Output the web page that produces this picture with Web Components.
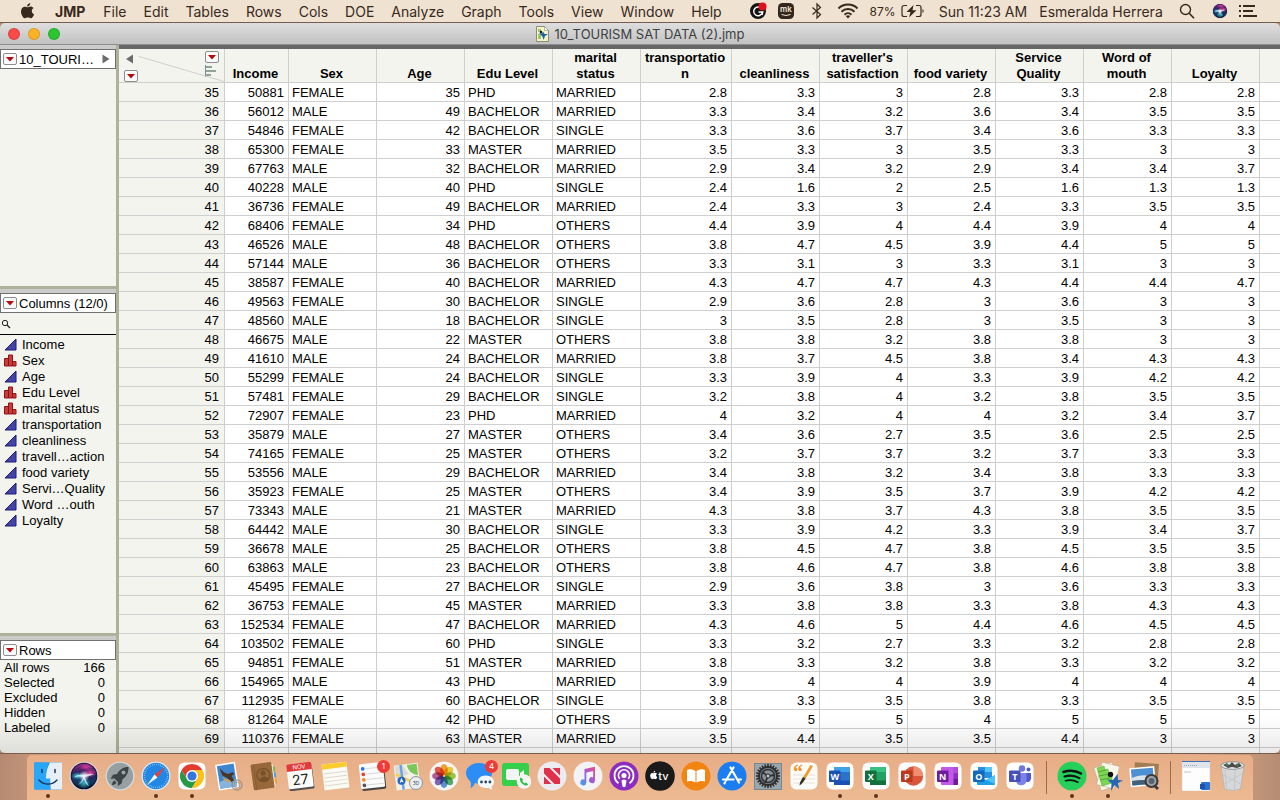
<!DOCTYPE html>
<html lang="en">
<head>
<meta charset="utf-8">
<title>10_TOURISM SAT DATA (2).jmp</title>
<style>
  body {
    margin: 0;
    height: 100vh;
    overflow: hidden;
    display: flex;
    flex-direction: column;
    background: linear-gradient(90deg, #b58a72, #e3ae8a 8%, #e3ae8a 92%, #b58d73);
    font-family: "Liberation Sans", Arial, sans-serif;
    font-size: 13px;
    color: #000;
  }
</style>
</head>
<body>
  <menu-bar>
    <menu-item strong>JMP</menu-item>
    <menu-item>File</menu-item>
    <menu-item>Edit</menu-item>
    <menu-item>Tables</menu-item>
    <menu-item>Rows</menu-item>
    <menu-item>Cols</menu-item>
    <menu-item>DOE</menu-item>
    <menu-item>Analyze</menu-item>
    <menu-item>Graph</menu-item>
    <menu-item>Tools</menu-item>
    <menu-item>View</menu-item>
    <menu-item>Window</menu-item>
    <menu-item>Help</menu-item>
    <status-area slot="status"></status-area>
  </menu-bar>

  <jmp-window>
    <span slot="title">10_TOURISM SAT DATA (2).jmp</span>
    <side-panel slot="side" expandable>
      <span slot="heading">10_TOURI…</span>
    </side-panel>
    <side-panel slot="side">
      <span slot="heading">Columns (12/0)</span>
      <column-list></column-list>
    </side-panel>
    <side-panel slot="side">
      <span slot="heading">Rows</span>
      <row-counts></row-counts>
    </side-panel>
    <data-grid></data-grid>
  </jmp-window>

  <dock-bar></dock-bar>

<script>
// ---------- small helper ----------
const attach = (el, html) => {
  const template = document.createElement("template")
  template.innerHTML = html
  el.attachShadow({ mode: "open" })
  el.shadowRoot.appendChild(template.content.cloneNode(true))
}

// siri is used both in the menu bar and in the dock
const siri = `
  <svg viewBox="0 0 30 30" aria-hidden="true">
    <defs>
      <linearGradient id="sg" x1="0" y1="0" x2="0" y2="1">
        <stop offset="0" stop-color="#8d2a86"/><stop offset=".4" stop-color="#2a1f5c"/>
        <stop offset=".75" stop-color="#15365f"/><stop offset="1" stop-color="#0a1026"/>
      </linearGradient>
      <radialGradient id="sw"><stop offset="0" stop-color="#fff"/><stop offset="1" stop-color="#fff" stop-opacity="0"/></radialGradient>
      <radialGradient id="sp"><stop offset="0" stop-color="#f0419c"/><stop offset="1" stop-color="#f0419c" stop-opacity="0"/></radialGradient>
      <radialGradient id="st"><stop offset="0" stop-color="#35d8e0"/><stop offset="1" stop-color="#35d8e0" stop-opacity="0"/></radialGradient>
    </defs>
    <circle cx="15" cy="15" r="14.500" fill="#d9d4dc"/>
    <circle cx="15" cy="15" r="13.300" fill="#0d0b20"/>
    <circle cx="15" cy="15" r="12.600" fill="url(#sg)"/>
    <ellipse cx="21" cy="12" rx="7" ry="4.500" fill="url(#sp)"/>
    <ellipse cx="17" cy="6" rx="7" ry="3.500" fill="url(#sp)" opacity=".8"/>
    <ellipse cx="8.500" cy="15" rx="6.500" ry="4" fill="url(#st)"/>
    <ellipse cx="15" cy="22" rx="6.500" ry="6" fill="url(#st)" opacity=".8"/>
    <path d="M15 14q-2 7-6 10 5-3 6-6 1 5 5 7-3-4-5-11zM15 14q-6-1-10 2 5-1 10 0 5 0 10-3-5-1-10 1z" fill="#e8f4ff" opacity=".75"/>
    <circle cx="15" cy="15" r="5.500" fill="url(#sw)"/>
  </svg>`

// ---------- menu bar ----------
class MenuBar extends HTMLElement {
  constructor() {
    super()
    attach(this, `
      <style>
        :host {
          display: flex;
          flex: none;
          align-items: center;
          height: 22px;
          padding: 0 18px 0 20px;
          background: #f0e2d0;
          border-bottom: 1px solid #765d50;
          color: #37291c;
          font-family: Inter, sans-serif;
          font-size: 14px;
        }
        nav { display: flex; }
        button { border: 0; padding: 0; margin-right: 11px; background: none; color: inherit; height: 22px; }
        svg { display: block; width: 15px; height: 18px; }
        slot[name=status] { display: block; }
        .fill { flex: 1; }
      </style>
      <button aria-label="Apple menu">
        <svg viewBox="0 0 15 18"><path fill="currentColor" d="M10.3 1c.1 1.900-1.500 3.600-3.200 3.500C6.900 2.800 8.500 1.200 10.300 1zM7.600 5.300c.7 0 1.600-.9 3-.8 1 0 2.300.6 3 1.600-2.700 1.600-2.200 5.200.500 6.300-.6 1.500-2 3.900-3.300 3.900-1.200 0-1.600-.7-3-.7s-1.900.7-2.900.7C3.200 16.300 1 12.500 1 9.400c0-3 2-4.700 3.800-4.700 1.200 0 2.200.6 2.800.6z"/></svg>
      </button>
      <nav><slot></slot></nav>
      <div class="fill"></div>
      <slot name="status"></slot>
    `)
  }
}

class MenuItem extends HTMLElement {
  constructor() {
    super()
    attach(this, `
      <style>
        :host { display: block; }
        button {
          border: 0;
          height: 22px;
          padding: 0 8px 0 9px;
          background: none;
          color: inherit;
          font: inherit;
        }
        :host([strong]) button { padding: 0 9px; font-weight: 700; }
      </style>
      <button><slot></slot></button>
    `)
  }
}

class StatusArea extends HTMLElement {
  constructor() {
    super()
    attach(this, `
      <style>
        :host { display: flex; align-items: center; height: 22px; }
        button {
          display: flex;
          align-items: center;
          justify-content: center;
          width: 28px;
          height: 22px;
          padding: 0;
          border: 0;
          background: none;
          color: inherit;
          font: inherit;
          white-space: nowrap;
        }
        .wide { width: 34px; }
        .search { width: 38px; }
        .battery { width: 70px; gap: 5px; font-size: 12px; }
        .clock { width: 102px; }
        .user { width: 134px; }
        svg { display: block; flex: none; width: 18px; height: 18px; }
        .siri svg { width: 16px; height: 16px; }
      </style>
      <button aria-label="Grammarly">
        <svg viewBox="0 0 18 18"><circle cx="9" cy="9" r="8" fill="#141414"/><path d="M12.500 6.500a4.400 4.400 0 1 0 .700 4.500M9.500 10h4.300l-.8 3" fill="none" stroke="#fff" stroke-width="1.400"/><circle cx="13.500" cy="4.500" r="4" fill="#e0101c"/></svg>
      </button>
      <button aria-label="mk">
        <svg viewBox="0 0 18 18"><rect x="1" y="1" width="16" height="16" rx="4.500" fill="#33271d"/><text x="9" y="10" font-family="Inter" font-size="8" font-weight="600" fill="#f0e2d0" text-anchor="middle">mk</text><path d="M4.500 12.500q4.500 2 9 0" stroke="#f0e2d0" fill="none"/></svg>
      </button>
      <button class="wide" aria-label="Bluetooth">
        <svg viewBox="0 0 18 18"><path d="M4.500 5.500l8 7L9 16V2l3.500 3.500-8 7" fill="none" stroke="currentColor" stroke-width="1.200"/></svg>
      </button>
      <button aria-label="Wi-Fi">
        <svg viewBox="0 0 22 18" style="width:22px"><g fill="none" stroke="currentColor" stroke-width="2"><path d="M1.500 6.500a13.500 13.500 0 0 1 19 0"/><path d="M4.500 9.700a9.300 9.300 0 0 1 13 0"/><path d="M7.500 12.700a5 5 0 0 1 7 0"/></g><path d="M8.900 14.200a3 3 0 0 1 4.200 0L11 16.400z" fill="currentColor"/></svg>
      </button>
      <button class="battery">87%
        <svg viewBox="0 0 24 14" style="width:24px;height:14px"><path d="M6 1.500H3a2 2 0 0 0-2 2v7a2 2 0 0 0 2 2h3M15 1.500h3a2 2 0 0 1 2 2v7a2 2 0 0 1-2 2h-3" fill="none" stroke="currentColor" stroke-width="1.200"/><path d="M21.500 5v4c1.500-.5 1.500-3.500 0-4zM12.500 1L5.500 8h4L8 13.500 15.500 6.200h-4z" fill="currentColor"/></svg>
      </button>
      <button class="clock">Sun 11:23 AM</button>
      <button class="user">Esmeralda Herrera</button>
      <button aria-label="Spotlight" class="search">
        <svg viewBox="0 0 18 18"><circle cx="7.500" cy="7.500" r="5" fill="none" stroke="currentColor" stroke-width="1.400"/><path d="M11.200 11.200l4.800 5" stroke="currentColor" stroke-width="1.600"/></svg>
      </button>
      <button aria-label="Siri" class="siri">${siri}</button>
      <button aria-label="Notification Center">
        <svg viewBox="0 0 18 18"><g stroke="currentColor" stroke-width="2"><path d="M0 4h2M4 4h12M0 9h2M4 9h10M0 14h2M4 14h14"/></g></svg>
      </button>
    `)
  }
}

// ---------- window ----------
class JmpWindow extends HTMLElement {
  constructor() {
    super()
    attach(this, `
      <style>
        :host {
          display: flex;
          flex: 1;
          flex-direction: column;
          min-height: 0;
          position: relative;
          overflow: hidden;
          border-radius: 5px;
        }
        header {
          display: grid;
          grid-template-columns: 1fr auto 1fr;
          align-items: center;
          flex: none;
          height: 21px;
          padding: 0 8px;
          background: linear-gradient(#dedede, #c2c2c2);
          border-bottom: 1px solid #8e8e8e;
          color: #404040;
          font-family: Inter, sans-serif;
        }
        .lights { display: flex; gap: 8px; }
        .lights button { width: 12px; height: 12px; padding: 0; border: 1px solid #0002; border-radius: 50%; }
        h1 { display: flex; align-items: center; gap: 6px; margin: 0; font-size: 13px; font-weight: 400; }
        .body { flex: 1; min-height: 0; display: flex; }
        aside {
          flex: none;
          display: grid;
          grid-template-rows: 241fr 344fr 117fr;
          gap: 3px;
          width: 116px;
          border-right: 3px solid #afb19b;
          background: #afb19b;
        }
        main { flex: 1; min-width: 0; overflow: hidden; border-top: 4px solid #676767; background: #fff; }
        /* soft shade that the dock throws on the window */
        .shade {
          position: absolute;
          inset: auto 0 0 0;
          height: 36px;
          background: linear-gradient(#0000, #00000016);
          pointer-events: none;
        }
      </style>
      <header>
        <div class="lights">
          <button aria-label="Close" style="background:#fb4a47"></button>
          <button aria-label="Minimize" style="background:#fdb225"></button>
          <button aria-label="Zoom" style="background:#2bc532"></button>
        </div>
        <h1>
          <svg width="13" height="16" viewBox="0 0 13 16"><path d="M.5.500h8l4 4v11H.5z" fill="#f4f3c8" stroke="#8c8c78"/><path d="M8.500.500v4h4z" fill="#fff" stroke="#8c8c78" stroke-width=".6"/><path d="M2 3h3v3H2zM2 8h3v5H2z" fill="#9bc76b"/><path d="M3 7l3 .5 1-2 1.500 2.500L12 8 9 10l-1.500 4L6.500 10.500z" fill="#1f5fa8"/><circle cx="5" cy="6" r="1.200" fill="#111"/></svg>
          <slot name="title"></slot>
        </h1>
      </header>
      <div class="body">
        <aside><slot name="side"></slot></aside>
        <main><slot></slot></main>
      </div>
      <div class="shade"></div>
    `)
  }
}

class RedTriangle extends HTMLElement {
  constructor() {
    super()
    attach(this, `
      <style>
        :host { display: block; flex: none; }
        button {
          display: grid;
          place-items: center;
          width: 14px;
          height: 12px;
          padding: 0;
          border: 1px solid #8d8d8d;
          border-radius: 2px;
          background: #fafafa;
        }
        svg { display: block; }
      </style>
      <button aria-label="Options"><svg width="8" height="5" viewBox="0 0 8 5"><path d="M0 0h8L4 4.500z" fill="#b3090f"/></svg></button>
    `)
  }
}

class SidePanel extends HTMLElement {
  constructor() {
    super()
    attach(this, `
      <style>
        :host { display: block; min-height: 0; overflow: hidden; background: #f3f4ee; }
        .edge { border-top: 4px solid #cbcbc9; }
        header {
          display: flex;
          align-items: center;
          gap: 2px;
          box-sizing: border-box;
          height: 20px;
          padding: 0 5px 0 2px;
          border: 1px solid #707070;
          background: #fff;
          white-space: nowrap;
        }
        .more { flex: 1; display: none; }
        .more svg { display: block; margin-left: auto; }
        :host([expandable]) .more { display: block; }
      </style>
      <div class="edge">
        <header>
          <red-triangle></red-triangle>
          <slot name="heading"></slot>
          <span class="more"><svg width="8" height="10" viewBox="0 0 8 10"><path d="M.500.500v9L7.500 5z" fill="#6c6c6c"/></svg></span>
        </header>
      </div>
      <slot></slot>
    `)
  }
}

const columns = [
  ["Income", 1], ["Sex", 0], ["Age", 1], ["Edu Level", 0], ["marital status", 0],
  ["transportation", 1], ["cleanliness", 1], ["travell…action", 1], ["food variety", 1],
  ["Servi…Quality", 1], ["Word …outh", 1], ["Loyalty", 1]
]

const continuous = `<svg width="13" height="13" viewBox="0 0 13 13"><path d="M12 1v11H1z" fill="#4444a8" stroke="#1d1d72"/></svg>`
const nominal = `<svg width="13" height="13" viewBox="0 0 13 13"><path d="M.500 4.500h4V12h-4zM4.500 1h4v11h-4zM8.500 7.500h3.500V12H8.500z" fill="#c83c3c" stroke="#8c1414"/></svg>`

class ColumnList extends HTMLElement {
  constructor() {
    super()
    attach(this, `
      <style>
        :host { display: block; }
        label {
          display: flex;
          align-items: center;
          height: 22px;
          margin-bottom: 1px;
          border-bottom: 1px solid #000;
          box-sizing: border-box;
        }
        label svg { flex: none; margin: 0 4px 0 1px; }
        input { flex: 1; min-width: 0; border: 0; padding: 0; outline: 0; background: none; font: inherit; }
        ul { list-style: none; margin: 0; padding: 0 0 0 4px; }
        li { display: flex; align-items: center; gap: 5px; height: 16px; white-space: nowrap; }
      </style>
      <label><svg width="10" height="10" viewBox="0 0 10 10"><circle cx="4" cy="4" r="2.700" fill="none" stroke="#222"/><path d="M6 6l3 3" stroke="#222" stroke-width="1.300"/></svg><input type="search" aria-label="Filter columns"></label>
      <ul>${columns.map(([name, c]) => `<li>${c ? continuous : nominal}<span>${name}</span></li>`).join("")}</ul>
    `)
  }
}

class RowCounts extends HTMLElement {
  constructor() {
    super()
    const counts = { "All rows": 166, Selected: 0, Excluded: 0, Hidden: 0, Labeled: 0 }
    attach(this, `
      <style>
        :host { display: block; }
        dl { margin: 0; padding: 0 11px 0 4px; }
        div { display: flex; justify-content: space-between; line-height: 15px; }
        dd { margin: 0; }
      </style>
      <dl>${Object.entries(counts).map(([k, v]) => `<div><dt>${k}</dt><dd>${v}</dd></div>`).join("")}</dl>
    `)
  }
}

// ---------- data table ----------
// sex: F/M, education: P/B/M, marital: M/S/O
const data = `
35 50881 F 35 P M 2.8 3.3 3 2.8 3.3 2.8 2.8
36 56012 M 49 B M 3.3 3.4 3.2 3.6 3.4 3.5 3.5
37 54846 F 42 B S 3.3 3.6 3.7 3.4 3.6 3.3 3.3
38 65300 F 33 M M 3.5 3.3 3 3.5 3.3 3 3
39 67763 M 32 B M 2.9 3.4 3.2 2.9 3.4 3.4 3.7
40 40228 M 40 P S 2.4 1.6 2 2.5 1.6 1.3 1.3
41 36736 F 49 B M 2.4 3.3 3 2.4 3.3 3.5 3.5
42 68406 F 34 P O 4.4 3.9 4 4.4 3.9 4 4
43 46526 M 48 B O 3.8 4.7 4.5 3.9 4.4 5 5
44 57144 M 36 B O 3.3 3.1 3 3.3 3.1 3 3
45 38587 F 40 B M 4.3 4.7 4.7 4.3 4.4 4.4 4.7
46 49563 F 30 B S 2.9 3.6 2.8 3 3.6 3 3
47 48560 M 18 B S 3 3.5 2.8 3 3.5 3 3
48 46675 M 22 M O 3.8 3.8 3.2 3.8 3.8 3 3
49 41610 M 24 B M 3.8 3.7 4.5 3.8 3.4 4.3 4.3
50 55299 F 24 B S 3.3 3.9 4 3.3 3.9 4.2 4.2
51 57481 F 29 B S 3.2 3.8 4 3.2 3.8 3.5 3.5
52 72907 F 23 P M 4 3.2 4 4 3.2 3.4 3.7
53 35879 M 27 M O 3.4 3.6 2.7 3.5 3.6 2.5 2.5
54 74165 F 25 M O 3.2 3.7 3.7 3.2 3.7 3.3 3.3
55 53556 M 29 B M 3.4 3.8 3.2 3.4 3.8 3.3 3.3
56 35923 F 25 M O 3.4 3.9 3.5 3.7 3.9 4.2 4.2
57 73343 M 21 M M 4.3 3.8 3.7 4.3 3.8 3.5 3.5
58 64442 M 30 B S 3.3 3.9 4.2 3.3 3.9 3.4 3.7
59 36678 M 25 B O 3.8 4.5 4.7 3.8 4.5 3.5 3.5
60 63863 M 23 B O 3.8 4.6 4.7 3.8 4.6 3.8 3.8
61 45495 F 27 B S 2.9 3.6 3.8 3 3.6 3.3 3.3
62 36753 F 45 M M 3.3 3.8 3.8 3.3 3.8 4.3 4.3
63 152534 F 47 B M 4.3 4.6 5 4.4 4.6 4.5 4.5
64 103502 F 60 P S 3.3 3.2 2.7 3.3 3.2 2.8 2.8
65 94851 F 51 M M 3.8 3.3 3.2 3.8 3.3 3.2 3.2
66 154965 M 43 P M 3.9 4 4 3.9 4 4 4
67 112935 F 60 B S 3.8 3.3 3.5 3.8 3.3 3.5 3.5
68 81264 M 42 P O 3.9 5 5 4 5 5 5
69 110376 F 63 M M 3.5 4.4 3.5 3.5 4.4 3 3
70 105900 F 52 B O 3.3 3.8 3 3.8 3.8 3 3`

const sex = { F: "FEMALE", M: "MALE" }
const edu = { P: "PHD", B: "BACHELOR", M: "MASTER" }
const marital = { M: "MARRIED", S: "SINGLE", O: "OTHERS" }

const toRow = line => {
  const [n, income, s, age, e, m, ...scores] = line.split(" ")
  return `<tr><th scope="row">${n}</th><td>${income}</td><td class="t">${sex[s]}</td><td>${age}</td>
    <td class="t">${edu[e]}</td><td class="t">${marital[m]}</td>
    ${scores.map(v => `<td>${v}</td>`).join("")}<td></td></tr>`
}

const widths = [106, 64, 88, 88, 88, 88, 91, 88, 88, 88, 88, 88, 88]
const headings = ["Income", "Sex", "Age", "Edu Level", "marital status", "transportation", "cleanliness",
  "traveller's satisfaction", "food variety", "Service Quality", "Word of mouth", "Loyalty", ""]

class DataGrid extends HTMLElement {
  constructor() {
    super()
    attach(this, `
      <style>
        :host { display: block; }
        table { width: 100%; border-collapse: separate; border-spacing: 0; table-layout: fixed; font-size: 13px; }
        th, td {
          box-sizing: border-box;
          height: 19px;
          padding: 1px 4px 0;
          border-right: 1px solid #cfcfcf;
          border-bottom: 1px solid #cfcfcf;
          line-height: 17px;
          text-align: right;
          white-space: nowrap;
          overflow: hidden;
        }
        td.t { text-align: left; padding: 1px 3px 0; }
        th { background: #f3f4ee; font-weight: 400; }
        tbody th { padding-right: 5px; }
        thead th {
          height: 34px;
          padding: 1px 4px 0 2px;
          line-height: 16px;
          font-weight: 700;
          text-align: center;
          vertical-align: bottom;
          white-space: normal;
          overflow-wrap: anywhere;
        }
        tr > :last-child { border-right: 0; }
        tbody tr:last-child > * { color: #8a8a8a; }
        .corner { position: relative; display: flex; justify-content: space-between; height: 32px; padding: 0 1px 0 3px; }
        .corner .line { position: absolute; left: 18px; top: 6px; }
        .corner > div { display: flex; flex-direction: column; justify-content: space-between; gap: 1px; }
        .corner .left { padding-top: 4px; }
        .corner .right { padding: 1px 0 5px; }
        .corner svg { display: block; }
      </style>
      <table>
        <colgroup>${widths.map(w => `<col style="width:${w}px">`).join("")}<col></colgroup>
        <thead><tr>
          <th>
            <div class="corner">
              <svg class="line" width="85" height="26" viewBox="0 0 85 26"><path d="M0 .500L85 25.500" stroke="#cfcfcf"/></svg>
              <div class="left">
                <svg width="12" height="10" viewBox="0 0 12 10"><path d="M9 .500v9L2 5z" fill="#6c6c6c"/></svg>
                <red-triangle></red-triangle>
              </div>
              <div class="right">
                <red-triangle></red-triangle>
                <svg width="13" height="12" viewBox="0 0 13 12"><path d="M.500 0v12" stroke="#7c8c94"/><path d="M1 2h6M1 6h10M1 10h5" stroke="#8fa39b" stroke-width="2"/></svg>
              </div>
            </div>
          </th>
          ${headings.map(h => `<th scope="col">${h}</th>`).join("")}
        </tr></thead>
        <tbody>${data.trim().split("\n").map(toRow).join("")}</tbody>
      </table>
    `)
  }
}

// ---------- dock ----------
const office = (letter, dark, mid, light, shape) => `
  <rect x="1.500" y="1.500" width="27" height="27" rx="6" fill="#fff"/>
  ${shape || `<path d="M9 6h15a1 1 0 0 1 1 1v16a1 1 0 0 1-1 1H9z" fill="${mid}"/><path d="M9 6h15a1 1 0 0 1 1 1v4H9z" fill="${light}"/><path d="M9 19.500h16V23a1 1 0 0 1-1 1H9z" fill="${dark}"/>`}
  <rect x="4" y="9.500" width="11.500" height="11.500" rx="1" fill="${dark}"/>
  <text x="9.750" y="18.500" font-family="Open Sans" font-size="9" font-weight="700" fill="#fff" text-anchor="middle">${letter}</text>`

const petals = ["#f79a1e", "#f2cc22", "#9cc32e", "#45a862", "#4f8fd0", "#7458b0", "#b0508f", "#e64a38"]
  .map((c, i) => `<ellipse cx="15" cy="8.700" rx="3.800" ry="5.600" fill="${c}" opacity=".9" style="mix-blend-mode:multiply" transform="rotate(${i * 45} 15 15)"/>`).join("")

const teeth = Array.from({ length: 24 }, (_, i) => `<path d="M14.200 3h1.600v3h-1.600z" transform="rotate(${i * 15} 15 15)"/>`).join("")

const icons = {
  Finder: `<rect x="1" y="1.500" width="28" height="27" rx="1.500" fill="#1d96f5"/><path d="M1 1.500h14L13 16h4l.5 12.500H1z" fill="#2aa6f8"/><path d="M17 1.500h12v27H18c-.7-4-.9-7-.8-11h-4.300C13 11 14.500 6 17 1.500z" fill="#e6eef6"/><path d="M9 8.500v3M22 8.500v3" stroke="#16365a" stroke-width="1.500" stroke-linecap="round"/><path d="M6 19c5 5.500 13 5.500 18 0" fill="none" stroke="#16365a" stroke-width="1.400" stroke-linecap="round"/>`,
  Siri: siri,
  Launchpad: `<circle cx="15" cy="15" r="14.500" fill="#d5d9da"/><circle cx="15" cy="15" r="13.200" fill="#96a0a3"/><path d="M23.500 6c-5-.2-9 2.500-11.500 7l-4 .7-2.500 4 4-.3 3.500 3.600-.3 4 4-2.500.8-4.200c4-2.800 6.200-7 6-12.300z" fill="#3d4447"/><circle cx="18.500" cy="11.500" r="2" fill="#9aa5a8"/><path d="M9.500 19.500c-2 1-2.500 3-2.500 4.500 1.500 0 3.500-.5 4.500-2.500z" fill="#3d4447"/>`,
  Safari: `<circle cx="15" cy="15" r="14.500" fill="#e4e8ec"/><circle cx="15" cy="15" r="13.200" fill="#2186e4"/><circle cx="15" cy="15" r="11.500" fill="none" stroke="#bfe2fb" stroke-width="1.500" stroke-dasharray=".5 1.500"/><path d="M24 6l-7.500 10.500L13.500 13.500z" fill="#ee3e37"/><path d="M6 24l7.500-10.500 3 3z" fill="#f6f6f6"/>`,
  Chrome: `<rect x="1.500" y="1.500" width="27" height="27" rx="6" fill="#fff"/><path d="M4.600 9A12 12 0 0 1 25.400 9H15l-5.200 9z" fill="#e33b2e"/><path d="M4.600 9l5.200 9h10.400L15 27A12 12 0 0 1 4.600 9z" fill="#249a48"/><path d="M25.400 9A12 12 0 0 1 15 27l5.200-9L15 9z" fill="#fbc116"/><circle cx="15" cy="15" r="6" fill="#fff"/><circle cx="15" cy="15" r="4.600" fill="#3475e0"/>`,
  Mail: `<g transform="rotate(-9 15 15)"><rect x="4" y="2" width="20" height="26" fill="#fff"/><rect x="5.500" y="3.500" width="17" height="23" fill="#3f86d0"/><path d="M5.500 20q8-4 17 0v6.500h-17z" fill="#86b4dd"/><path d="M8 6l4 5 3 2 5-1 1.500 2-3 1.500 2 5-3 1-4-5-4-3z" fill="#4a3625"/><path d="M9 15l8 5-1 2-5-3z" fill="#c8a15b"/></g><circle cx="24" cy="24" r="5" fill="none" stroke="#8b8583" stroke-width="1.500" opacity=".65"/><circle cx="24" cy="24" r="3" fill="none" stroke="#8b8583" opacity=".6"/>`,
  Contacts: `<g transform="rotate(-8 15 15)"><rect x="24" y="7" width="3" height="5" fill="#71b94a"/><rect x="24" y="13" width="3" height="5" fill="#42a5dc"/><rect x="24" y="19" width="3" height="5" fill="#ef9e35"/><rect x="23" y="4" width="2" height="23" fill="#eee"/><rect x="3" y="2" width="21" height="26" rx="1.500" fill="#96683a"/><path d="M6 2v26" stroke="#8a5f34"/><circle cx="14.500" cy="14" r="6.500" fill="none" stroke="#76502b" stroke-width="1.300"/><circle cx="14.500" cy="12" r="2.500" fill="#76502b"/><path d="M10 18q4.500-5 9 0-4.500 4-9 0z" fill="#76502b"/></g>`,
  Calendar: `<g transform="rotate(-7 15 15)"><rect x="3" y="4" width="25" height="25" rx="1.500" fill="#55504e"/><rect x="2.500" y="2" width="25" height="25" rx="1.500" fill="#fcfcfc"/><path d="M2.500 9.500V3.500A1.500 1.500 0 0 1 4 2h22a1.500 1.500 0 0 1 1.500 1.500v6z" fill="#e03a3a"/><text x="15" y="8" font-family="Inter" font-size="6" fill="#fff" text-anchor="middle">NOV</text><text x="15" y="23.500" font-family="Inter" font-size="14" fill="#222" text-anchor="middle">27</text></g>`,
  Notes: `<g transform="rotate(-7 15 15)"><rect x="2" y="2" width="25" height="26" rx="1" fill="#fbfaf4"/><path d="M2 2h25v5H2z" fill="#fbcc2e"/><path d="M3 11.500h23M3 15.500h23M3 19.500h23M3 23.500h23" stroke="#dcd8cc"/></g>`,
  Reminders: `<g transform="rotate(-6 15 15)"><rect x="4" y="3" width="24" height="26" rx="1.500" fill="#4b4644"/><rect x="3" y="2" width="24" height="25" rx="1.500" fill="#fbfbfb"/><path d="M9 7h17M9 12.500h17M9 18h17M9 23.500h17" stroke="#d8d8d8"/><circle cx="6.500" cy="7" r="1.900" fill="#2878e2"/><circle cx="6.500" cy="12.500" r="1.900" fill="#e34236"/><circle cx="6.500" cy="18" r="1.900" fill="#ef8b2c"/><circle cx="6.500" cy="23.500" r="1.900" fill="#52585c"/></g>`,
  Maps: `<g transform="rotate(-7 15 15)"><rect x="2" y="3" width="24" height="25" fill="#f4f0e4"/><path d="M3 4h8l5 9-13 3z" fill="#d9dbd4"/><path d="M13 4h12v14C19 15 14 10 13 4z" fill="#7cc65c"/><path d="M14 3c0 8 5 12 12 14" fill="none" stroke="#f3f1e8" stroke-width="2"/><path d="M3 12l23 14" stroke="#f6cf55" stroke-width="2.500"/><path d="M9 3v25" stroke="#6fa4e4" stroke-width="2.500"/><circle cx="8" cy="19" r="4" fill="#2366c8"/><path d="M8 16l2 5-2-1-2 1z" fill="#fff"/></g><circle cx="23" cy="22" r="6.500" fill="#e9edf0" stroke="#8b959c"/><text x="23" y="24" font-family="Inter" font-size="5" fill="#45525c" text-anchor="middle">3D</text>`,
  Photos: `<g style="isolation:isolate"><circle cx="15" cy="15" r="14.500" fill="#f6f6f6"/>${petals}</g>`,
  Messages: `<path d="M14 2c7.500 0 13 4.500 13 10s-5.500 10.500-13 10.500q-2 0-4-.5c-1 2.500-2.500 4.500-4.500 5 .5-2 .5-4 0-6.500C3 18.500 1 15.500 1 12 1 6.500 6.500 2 14 2z" fill="#2b8df5"/><path d="M20.500 14.500c5 0 8.500 3 8.500 6.300 0 2-1 3.500-2.500 4.700 0 1.200.3 2.200 1.200 3-1.500 0-3-.7-4-1.700-6 1-11-1.700-11-6 0-3.300 3.300-6.300 7.800-6.300z" fill="#f4f8fb"/><g fill="#28496b"><circle cx="16.500" cy="21" r="1.400"/><circle cx="20.700" cy="21" r="1.400"/><circle cx="24.900" cy="21" r="1.400"/></g>`,
  FaceTime: `<rect x="1" y="2" width="27" height="23" rx="3" fill="#34cf4b"/><rect x="5" y="8" width="13" height="11" rx="2" fill="#f4f4f4"/><path d="M19 12l4-3v9l-4-3z" fill="#f4f4f4"/><circle cx="23" cy="20.500" r="7.300" fill="#f4f4f4"/><path d="M20 16.500c-2 1-1 4 1 6s5 3 6.200 1l-2-2-1.500.8c-1-.5-2-1.500-2.400-2.600l.8-1.300z" fill="#2dbf46"/>`,
  News: `<circle cx="15" cy="15" r="14.500" fill="#ececf0"/><path d="M7 7h5.500L23 17.500V23h-5.500L7 12.500zM7 15.500l7.500 7.500H7zM15.500 7H23v7.500z" fill="#e2304c"/>`,
  Music: `<circle cx="15" cy="15" r="14.500" fill="#f3f3f6"/><defs><linearGradient id="mu" x1="0" y1="1" x2="1" y2="0"><stop offset="0" stop-color="#3ba9f2"/><stop offset=".5" stop-color="#9b5be0"/><stop offset="1" stop-color="#f24a7b"/></linearGradient></defs><path d="M11.500 8L22 5.800v13.700a3 3 0 1 1-1.800-3.100V10l-6.900 1.500v10.300a3 3 0 1 1-1.800-3.100z" fill="url(#mu)"/>`,
  Podcasts: `<circle cx="15" cy="15" r="14.500" fill="#8d2cc2"/><g fill="none" stroke="#fff" stroke-width="1.800"><path d="M9.500 22.300a9.500 9.500 0 1 1 11 0"/><path d="M10.800 18a5.500 5.500 0 1 1 8.400 0"/></g><circle cx="15" cy="14.500" r="2.600" fill="#fff"/><path d="M12.500 19.500q2.500-2 5 0l-1 6q-1.500 1.500-3 0z" fill="#fff"/>`,
  TV: `<circle cx="15" cy="15" r="14.800" fill="#1a1a1a"/><path d="M10.200 9.800c.1 1-.8 2-1.800 2 0-1 .8-1.900 1.800-2zM8.600 12.300c.5 0 1-.5 1.800-.5.600 0 1.200.3 1.600.9-1.400.9-1.200 2.800.3 3.400-.3.900-1 2.100-1.800 2.100-.7 0-.9-.4-1.700-.4s-1 .4-1.600.4c-1 0-2-2-2-3.600s1-2.600 2-2.600c.6 0 1 .3 1.400.3z" fill="#fff"/><text x="18.500" y="18.500" font-family="Inter" font-size="11" font-weight="500" fill="#fff" text-anchor="middle">tv</text>`,
  Books: `<circle cx="15" cy="15" r="14.500" fill="#f28411"/><path d="M14.500 10c-3-2-6-2-8.500-1v11.500c3-1 6-.5 8.500 1zM15.500 10c3-2 6-2 8.500-1v11.500c-3-1-6-.5-8.500 1z" fill="#fff"/>`,
  "App Store": `<circle cx="15" cy="15" r="14.500" fill="#1c7df0"/><g stroke="#fff" stroke-width="2.200" stroke-linecap="round"><path d="M16.500 6.500L9 19.500M13.500 6.500l8.500 15M6 18.500h10.500M20.500 18.500H24M8 21.500l-.5.800"/></g>`,
  "System Preferences": `<rect x="1" y="2" width="28" height="27" fill="#98a6ae"/><rect x="1.500" y="2.500" width="27" height="26" fill="none" stroke="#7b878e"/><g fill="#2d2d2d">${teeth}</g><circle cx="15" cy="15" r="10" fill="#2d2d2d"/><circle cx="15" cy="15" r="8" fill="#87929a"/><circle cx="15" cy="15" r="6.500" fill="none" stroke="#303030" stroke-width="1.500"/><path d="M15 15L9 11M15 15l7-1M15 15l-3 7" stroke="#303030" stroke-width="1.800"/><circle cx="15" cy="15" r="2" fill="#c0c8cc" stroke="#303030"/>`,
  Pages: `<rect x="1.500" y="1.500" width="27" height="27" rx="6" fill="#fcfbf7"/><path d="M4 14h22M4 18h22M4 22h22" stroke="#e6e2d8"/><text x="4" y="18" font-family="Liberation Serif" font-size="20" font-weight="700" fill="#f2922a">“</text><path d="M21.500 4l2.500 1-10 17-2.500-1.500z" fill="#f09a2d"/><path d="M14 16l2.500 1.500-4 5.500-2 1.500.5-3z" fill="#2f2f33"/>`,
  Word: office("W", "#1b50b4", "#2b72cf", "#43a1ea"),
  Excel: office("X", "#12713d", "#23a064", "#35c284"),
  PowerPoint: office("P", "#b93a1f", "", "", `<circle cx="16.500" cy="15" r="9.700" fill="#d9563a"/><path d="M16.500 5.300A9.700 9.700 0 0 1 26.200 15h-9.700z" fill="#f08e72"/>`),
  OneNote: office("N", "#6d1c9c", "", "", `<rect x="8" y="6" width="17" height="18" rx="1" fill="#c359e6"/><path d="M20.500 6H24a1 1 0 0 1 1 1v5h-4.500z" fill="#b14bdc"/><path d="M20.500 12H25v6h-4.500z" fill="#8e2fc0"/><path d="M20.500 18H25v5a1 1 0 0 1-1 1h-3.500z" fill="#6a1b98"/>`),
  Outlook: office("O", "#1268bd", "", "", `<path d="M9 6h14v11H9z" fill="#2691e2"/><path d="M16 6h7v5h-7z" fill="#56c4f5"/><path d="M8 14l9 5 9-5v9a1 1 0 0 1-1 1H9a1 1 0 0 1-1-1z" fill="#1ba0e8"/><path d="M26 14v9l-9-4z" fill="#4cc3f5"/>`),
  Teams: office("T", "#4750b8", "", "", `<circle cx="17" cy="7.500" r="3.200" fill="#7077dc"/><circle cx="23.500" cy="8.500" r="2" fill="#5059c9"/><path d="M20 12h6v6a3.500 3.500 0 0 1-6 2z" fill="#5059c9"/><path d="M11 12h10.500v7a5.300 5.300 0 0 1-10.500 1z" fill="#7b83eb"/>`),
  Spotify: `<circle cx="15" cy="15" r="14.500" fill="#25d05a"/><g fill="none" stroke="#111" stroke-linecap="round"><path d="M6.500 11c6-2 12.500-1.300 17.500 1.500" stroke-width="2.500"/><path d="M7.500 15.500c5-1.500 10.500-.9 15 1.600" stroke-width="2.100"/><path d="M8.500 19.700c4-1.100 8.500-.7 12.300 1.500" stroke-width="1.700"/></g>`,
  JMP: `<g transform="rotate(-18 15 15)"><rect x="4" y="3" width="19" height="24" fill="#f7f5e5" stroke="#b7a88c" stroke-width=".5"/></g><g transform="rotate(14 15 15)"><rect x="6" y="3" width="18" height="23" fill="#faf8ea" stroke="#b7a88c" stroke-width=".5"/></g><path d="M4 7l7-2 1 4 3-1 1 5h3v9l-10 3z" fill="#7cd653" stroke="#4fa832" stroke-width=".5"/><path d="M5 11l8-2M6 15l10-2M7 19l10-2" stroke="#4fa832"/><circle cx="17.500" cy="13.500" r="2.700" fill="#111"/><path d="M14 18.500l6 .5 4.500-6 .5 6 5 .5-5 2.500 1 6-4.500-4-3.500 6 .5-7.500z" fill="#2664b4"/>`,
  Preview: `<g transform="rotate(4 15 15)"><rect x="5" y="2" width="24" height="20" fill="#a07c50"/></g><g transform="rotate(-5 15 15)"><rect x="1" y="6" width="25" height="19" fill="#fff"/><rect x="2.500" y="7.500" width="22" height="16" fill="#4d8fd3"/><path d="M2.500 16q11-4 22 1v6.500h-22z" fill="#d8e3ec"/><path d="M2.500 19q11-1 22 2v2.500h-22z" fill="#42617c"/></g><circle cx="22.500" cy="20" r="6" fill="#9aa5ab" stroke="#403c3a" stroke-width="2.200"/><circle cx="22.500" cy="20" r="3" fill="#56636b"/><path d="M26 25l3 3" stroke="#403c3a" stroke-width="3"/>`,
  Document: `<rect x="1" y="0" width="28" height="30" fill="#fdfdfd" stroke="#c8c8c8" stroke-width=".5"/><path d="M1 0h28v1H1z" fill="#3c6fb8"/><path d="M1 1h28v6H1z" fill="#dfe4ea"/><path d="M3 4.500h14" stroke="#9aa6b4" stroke-dasharray="1 1"/><path d="M3 11h7" stroke="#c4c4c4"/><rect x="20" y="21" width="9" height="8" rx="1" fill="#2b72cf"/><rect x="19" y="23" width="5" height="5" fill="#1b50b4"/>`,
  Trash: `<path d="M4 4h23l-3.500 24q-8 3-16 0z" fill="#d5d7d8" stroke="#a9abac" stroke-width=".6"/><path d="M8 9l1.500 18M18 9l-.5 19M6 14l18 9M25 13L7 23" stroke="#c4c7c9"/><ellipse cx="15.500" cy="4.500" rx="11.500" ry="3.800" fill="#eceeee" stroke="#8f9293"/><path d="M6 4l4-2 2 2 3-3 3 3 4-2 3 3-5 2-5-1-4 1z" fill="#4d4a49"/><path d="M9 3l2 2M19 3l2 2" stroke="#3c8f57" stroke-width="1.500"/>`
}

class DockIcon extends HTMLElement {
  constructor() {
    super()
    const name = this.getAttribute("name")
    const badge = this.getAttribute("badge")
    attach(this, `
      <style>
        :host { display: block; flex: none; width: 36px; }
        button {
          position: relative;
          display: flex;
          flex-direction: column;
          align-items: center;
          gap: 3px;
          width: 100%;
          padding: 6px 0 0;
          border: 0;
          background: none;
        }
        svg { display: block; width: 30px; height: 30px; }
        i { width: 4px; height: 4px; border-radius: 50%; }
        :host([running]) i { background: #5f321b; }
        b {
          position: absolute;
          top: 5px;
          right: 0;
          width: 13px;
          height: 13px;
          border-radius: 50%;
          background: #ee3b37;
          color: #fff;
          font: 8px/13px Inter, sans-serif;
          text-align: center;
        }
      </style>
      <button aria-label="${name}">
        <svg viewBox="0 0 30 30">${icons[name]}</svg>
        <i></i>
        ${badge ? `<b>${badge}</b>` : ""}
      </button>
    `)
  }
}

class DockBar extends HTMLElement {
  constructor() {
    super()
    const running = ["Finder", "Safari", "Chrome", "Word", "Excel", "Spotify", "JMP"]
    const badges = { Reminders: 1, Messages: 4 }
    const split = ["Spotify", "Document"]
    const items = Object.keys(icons).map(name => `
      ${split.includes(name) ? "<hr>" : ""}
      <dock-icon name="${name}" ${running.includes(name) ? "running" : ""} ${badges[name] ? `badge="${badges[name]}"` : ""}></dock-icon>`)
    attach(this, `
      <style>
        :host { display: flex; flex: none; justify-content: center; padding-top: 1px; border-top: 1px solid #7b5c4b; }
        div {
          display: flex;
          height: 45px;
          padding: 0 3px;
          border-radius: 5px 5px 0 0;
          background: linear-gradient(#e7ad87, #ecba92);
        }
        hr { flex: none; width: 1px; height: 33px; margin: 6px 7px 0 8px; border: 0; background: #9c6a4c; }
      </style>
      <div>${items.join("")}</div>
    `)
  }
}

customElements.define("red-triangle", RedTriangle)
customElements.define("menu-bar", MenuBar)
customElements.define("menu-item", MenuItem)
customElements.define("status-area", StatusArea)
customElements.define("jmp-window", JmpWindow)
customElements.define("side-panel", SidePanel)
customElements.define("column-list", ColumnList)
customElements.define("row-counts", RowCounts)
customElements.define("data-grid", DataGrid)
customElements.define("dock-icon", DockIcon)
customElements.define("dock-bar", DockBar)
</script>
</body>
</html>
